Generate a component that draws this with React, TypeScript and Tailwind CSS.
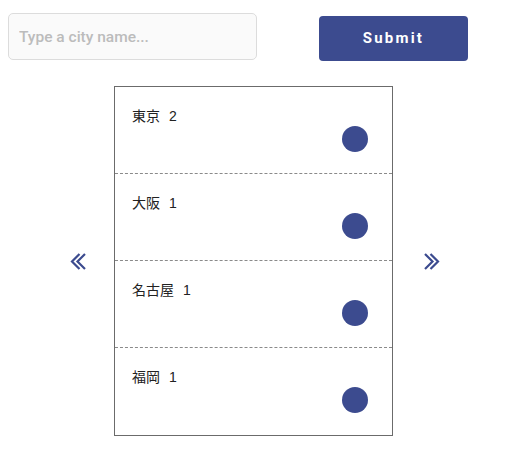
import { useState } from "react";

const cities = [
  { name: "東京", count: 2 },
  { name: "大阪", count: 1 },
  { name: "名古屋", count: 1 },
  { name: "福岡", count: 1 },
];

function DoubleChevron({ dir }: { dir: "left" | "right" }) {
  return (
    <svg
      width="16"
      height="17"
      viewBox="0 0 16 17"
      fill="none"
      stroke="#3c4b8f"
      strokeWidth="2.2"
      className={dir === "right" ? "rotate-180" : ""}
    >
      <polyline points="9.5,1 2,8.5 9.5,16" />
      <polyline points="15,1 7.5,8.5 15,16" />
    </svg>
  );
}

export default function App() {
  const [city, setCity] = useState("");

  return (
    <div className="w-[525px] h-[459px] bg-white font-['Roboto',sans-serif]">
      {/* Search bar */}
      <div className="flex items-start pt-[13px] pl-[8px]">
        <input
          value={city}
          onChange={(e) => setCity(e.target.value)}
          placeholder="Type a city name..."
          className="w-[249px] h-[47px] px-[10px] bg-[#fafafa] border border-[#dcdcdc] rounded-[5px] text-[15.5px] font-medium text-[#333] placeholder:text-[#bcbcbc] outline-none"
        />
        <button className="ml-[62px] mt-[3px] w-[149px] h-[45px] bg-[#3c4b8f] rounded-[4px] text-white text-[15px] font-bold tracking-[2.2px]">
          Submit
        </button>
      </div>

      {/* List with pager */}
      <div className="flex items-center pl-[70px] mt-[25px]">
        <button className="p-0">
          <DoubleChevron dir="left" />
        </button>
        <div className="ml-[28px] w-[279px] border border-[#6b6b6b] font-['Liberation_Sans','Noto_Sans_CJK_JP',sans-serif]">
          {cities.map((c, i) => (
            <div
              key={c.name}
              className={`h-[87px] pt-[19px] pl-[17px] pr-[24px] flex flex-col ${
                i < cities.length - 1 ? "border-b border-dashed border-[#8a8a8a]" : "h-[86px]"
              }`}
            >
              <div className="text-[14px] leading-[20px] text-[#222]">
                {c.name}
                <span className="ml-[9px]">{c.count}</span>
              </div>
              <div className="self-end w-[26px] h-[26px] rounded-full bg-[#3c4b8f]" />
            </div>
          ))}
        </div>
        <button className="ml-[31px] p-0">
          <DoubleChevron dir="right" />
        </button>
      </div>
    </div>
  );
}
